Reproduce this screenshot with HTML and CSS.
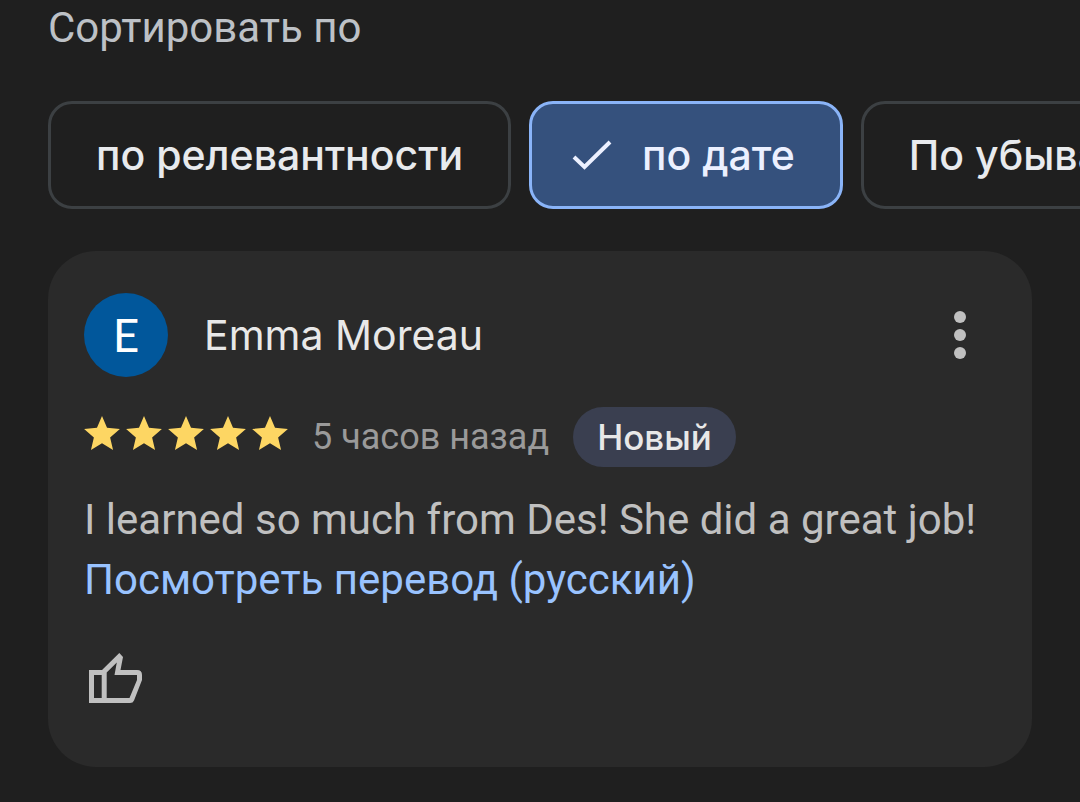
FILE: index.html
```
<!DOCTYPE html>
<html lang="ru">
<head>
<meta charset="utf-8">
<meta name="viewport" content="width=device-width, initial-scale=1">
<title>Отзывы</title>
<link rel="stylesheet" href="styles.css">
</head>
<body>
<svg class="symbols" aria-hidden="true">
  <symbol id="star" viewBox="2 2 20 19"><path d="M12 17.27 18.18 21l-1.64-7.03L22 9.24l-7.19-.61L12 2 9.19 8.63 2 9.24l5.46 4.73L5.82 21z"/></symbol>
</svg>
<main class="reviews">
  <h2 class="sort-title">Сортировать по</h2>
  <div class="chips">
    <button class="chip" type="button">по релевантности</button>
    <button class="chip chip-selected" type="button" aria-pressed="true">
      <svg class="check" viewBox="0 0 40 30" aria-hidden="true"><path d="M2 17 12.5 27 38 2"/></svg>
      по дате
    </button>
    <button class="chip" type="button">По убыванию</button>
  </div>
  <article class="card">
    <header class="author">
      <span class="avatar" aria-hidden="true">E</span>
      <h3 class="name">Emma Moreau</h3>
      <button class="more" type="button" aria-label="Ещё">
        <svg viewBox="0 0 12 48" aria-hidden="true"><circle cx="6" cy="6" r="6"/><circle cx="6" cy="24" r="6"/><circle cx="6" cy="42" r="6"/></svg>
      </button>
    </header>
    <div class="meta">
      <span class="stars" role="img" aria-label="5 из 5">
        <svg><use href="#star"/></svg>
        <svg><use href="#star"/></svg>
        <svg><use href="#star"/></svg>
        <svg><use href="#star"/></svg>
        <svg><use href="#star"/></svg>
      </span>
      <span class="time">5 часов назад</span>
      <span class="badge">Новый</span>
    </div>
    <p class="text">I learned so much from Des! She did a great job!</p>
    <a class="translate" href="#">Посмотреть перевод (русский)</a>
    <button class="like" type="button" aria-label="Нравится">
      <svg viewBox="0 0 53 50" aria-hidden="true"><path fill-rule="evenodd" d="M0 17H13L30.3 0 34 4 31.5 17H48Q53 17 53 22V27L45 47.5Q44 50 41 50H0ZM5 22V45H12.7V22ZM17.7 19.5V45H40.5L48 27V22H25.5L27.8 9.4Z"/></svg>
    </button>
  </article>
</main>
</body>
</html>
```
FILE: styles.css
```
* {
  box-sizing: border-box;
}

body {
  margin: 0;
  background: #1f1f1f;
  color: #c0c0c0;
  font-family: Roboto, sans-serif;
  font-size: 42px;
  line-height: 60px;
  overflow-x: hidden;
}

button {
  margin: 0;
  padding: 0;
  border: 0;
  background: none;
  color: inherit;
  font: inherit;
  cursor: pointer;
}

.symbols {
  display: none;
}

.reviews {
  padding: 0 48px 35px;
}

.sort-title {
  margin: 0;
  padding-bottom: 45px;
  color: #bdc1c6;
  font-size: 42px;
  font-weight: 400;
  line-height: 56px;
}

.chips {
  display: flex;
  gap: 18px;
  margin-right: -48px;
  overflow: hidden;
}

.chip {
  display: flex;
  flex: none;
  align-items: center;
  gap: 30px;
  height: 108px;
  padding: 0 45px;
  border: 3px solid #3c4043;
  border-radius: 24px;
  color: #e8eaed;
  font-family: Inter, sans-serif;
  font-size: 41px;
  font-weight: 500;
  white-space: nowrap;
}

.chip-selected {
  padding: 0 45px 0 40px;
  border-color: #8ab4f8;
  background: #35517d;
  color: #ecf0ff;
}

.check {
  width: 40px;
  height: 30px;
  fill: none;
  stroke: currentColor;
  stroke-width: 4;
}

.card {
  margin-top: 42px;
  padding: 42px 36px 64px;
  border-radius: 48px;
  background: #2a2a2a;
}

.author {
  display: flex;
  align-items: center;
}

.avatar {
  width: 84px;
  height: 84px;
  border-radius: 50%;
  background: #01579b;
  color: #fff;
  font-family: Lato, sans-serif;
  font-size: 46px;
  line-height: 84px;
  text-align: center;
}

.name {
  flex: 1;
  margin: 0 0 0 36px;
  color: #e8e8e8;
  font-family: Inter, sans-serif;
  font-size: 41px;
  font-weight: 400;
}

.more {
  display: flex;
  padding: 0 30px;
}

.more svg {
  width: 12px;
  height: 48px;
  fill: #c0c0c0;
}

.meta {
  display: flex;
  align-items: center;
  gap: 24px;
  margin-top: 30px;
}

.stars {
  display: flex;
  gap: 6px;
  padding-bottom: 8px;
}

.stars svg {
  width: 36px;
  height: 34px;
  fill: #fdd663;
}

.time {
  color: #9a9a9a;
  font-size: 36px;
}

.badge {
  padding: 0 24px;
  border-radius: 30px;
  background: #3a3f50;
  color: #e8e8e8;
  font-family: Inter, sans-serif;
  font-size: 35px;
  font-weight: 500;
}

.text {
  margin: 23px 0 0;
}

.translate {
  color: #99c3ff;
  text-decoration: none;
}

.like {
  display: block;
  margin: 43px 0 0 5px;
}

.like svg {
  display: block;
  width: 53px;
  height: 50px;
  fill: #c0c0c0;
}
```
